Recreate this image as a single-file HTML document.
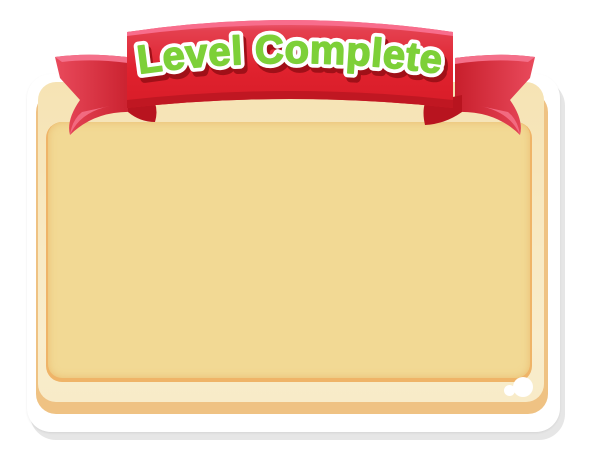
<!DOCTYPE html>
<html><head><meta charset="utf-8"><style>
html,body{margin:0;padding:0;background:#fff;}
body{width:590px;height:450px;position:relative;overflow:hidden;}
.shadow{position:absolute;left:30px;top:80px;width:535px;height:360px;border-radius:26px;background:#e6e6e6;}
.card{position:absolute;left:27px;top:74px;width:533px;height:358px;border-radius:24px;background:#fff;box-shadow:0 1px 2px rgba(0,0,0,.08);}
.base{position:absolute;left:36px;top:92px;width:512px;height:322px;border-radius:20px;background:#efc283;}
.panel{position:absolute;left:38px;top:82px;width:506px;height:320px;border-radius:18px;background:linear-gradient(#f6e3b4,#f9edcc 80%,#f8ebc8);}
.innerb{position:absolute;left:46px;top:122px;width:486px;height:260px;border-radius:16px;background:#efb468;}
.inner{position:absolute;left:48px;top:122px;width:482px;height:256px;border-radius:14px;background:#f2d994;box-shadow:inset 0 0 8px rgba(230,170,90,.6);}
.dot{position:absolute;border-radius:50%;background:#fff;}
</style></head><body>
<div class="shadow"></div>
<div class="card"></div>
<div class="base"></div>
<div class="panel"></div>
<div class="innerb"></div>
<div class="inner"></div>
<div class="dot" style="left:513px;top:377px;width:20px;height:20px"></div>
<div class="dot" style="left:504px;top:385px;width:11px;height:11px"></div>
<svg width="590" height="450" style="position:absolute;left:0;top:0">
<defs>
<linearGradient id="band" x1="0" y1="0" x2="0" y2="1">
<stop offset="0" stop-color="#f0607a"/><stop offset=".12" stop-color="#e4404f"/><stop offset=".55" stop-color="#e0222e"/><stop offset="1" stop-color="#d81c28"/></linearGradient>
<linearGradient id="tl" x1="0" y1="0" x2="1" y2="0"><stop offset="0" stop-color="#e94a5c"/><stop offset="1" stop-color="#c81f2c"/></linearGradient>
<linearGradient id="tr" x1="1" y1="0" x2="0" y2="0"><stop offset="0" stop-color="#e94a5c"/><stop offset="1" stop-color="#c81f2c"/></linearGradient>
<path id="arc" d="M138,74 Q290,52 442,74"/>
</defs>
<path d="M55,57 Q90,52 135,58 L135,112 Q95,110 70,135 Q66,120 80,100 L60,78 Z" fill="url(#tl)"/>
<path d="M55,57 Q90,52 135,58 L135,64 Q95,58 62,62 Z" fill="#f4708a"/>
<path d="M70,135 Q80,112 110,106 L82,112 Q72,120 70,135Z" fill="#f26a80"/>
<path d="M128,95 L155,103 Q158,112 155,122 Q140,122 128,112Z" fill="#b8141f"/>
<path d="M535,57 Q500,52 455,58 L455,112 Q495,110 520,135 Q524,120 510,100 L530,78 Z" fill="url(#tr)"/>
<path d="M535,57 Q500,52 455,58 L455,64 Q495,58 528,62 Z" fill="#f4708a"/>
<path d="M520,135 Q510,112 480,106 L508,112 Q518,120 520,135Z" fill="#f26a80"/>
<path d="M462,95 L425,103 Q422,112 425,125 Q445,124 462,112Z" fill="#b8141f"/>
<path d="M127,32 Q290,8 453,32 L453,108 Q290,90 127,108 Z" fill="url(#band)"/>
<path d="M127,32 Q290,8 453,32 L453,36 Q290,14 127,36 Z" fill="#f86d8c"/>
<path d="M127,100 Q290,82 453,100 L453,108 Q290,90 127,108Z" fill="#c01722"/>
<g font-family="Liberation Sans, sans-serif" font-weight="bold" font-size="40" letter-spacing="0.5">
<text transform="translate(3,5)" fill="#a01018" stroke="#a01018" stroke-width="9" stroke-linejoin="round"><textPath href="#arc" startOffset="50%" text-anchor="middle">Level Complete</textPath></text>
<text fill="#fff" stroke="#fff" stroke-width="9" stroke-linejoin="round"><textPath href="#arc" startOffset="50%" text-anchor="middle">Level Complete</textPath></text>
<text fill="#7dd038" stroke="#7dd038" stroke-width="1.5" stroke-linejoin="round"><textPath href="#arc" startOffset="50%" text-anchor="middle">Level Complete</textPath></text>
</g>
</svg>
</body></html>
